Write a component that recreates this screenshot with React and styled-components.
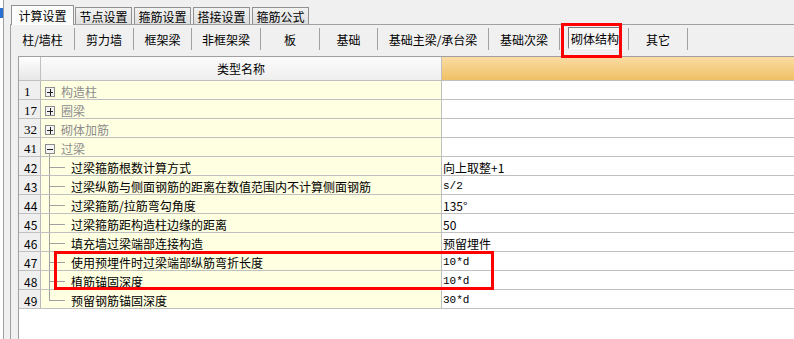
import styled, { createGlobalStyle } from "styled-components";

const GlobalStyle = createGlobalStyle`
  html, body { margin: 0; padding: 0; background: #f0f0f0; }
  body {
    font-family: "Noto Sans CJK SC", "Liberation Sans", sans-serif;
    font-size: 12px;
    color: #000;
  }
`;

const topTabs = [
  { label: "计算设置", active: true },
  { label: "节点设置" },
  { label: "箍筋设置" },
  { label: "搭接设置" },
  { label: "箍筋公式" },
];

const subTabs = [
  { label: "柱/墙柱", w: 64 },
  { label: "剪力墙", w: 59 },
  { label: "框架梁", w: 58 },
  { label: "非框架梁", w: 69 },
  { label: "板", w: 59 },
  { label: "基础", w: 58 },
  { label: "基础主梁/承台梁", w: 111 },
  { label: "基础次梁", w: 71 },
  { label: "砌体结构", w: 69, active: true },
  { label: "其它", w: 59 },
];

const rows = [
  { no: 1, name: "构造柱", group: "plus" },
  { no: 17, name: "圈梁", group: "plus" },
  { no: 32, name: "砌体加筋", group: "plus" },
  { no: 41, name: "过梁", group: "minus" },
  { no: 42, name: "过梁箍筋根数计算方式", value: "向上取整+1" },
  { no: 43, name: "过梁纵筋与侧面钢筋的距离在数值范围内不计算侧面钢筋", value: "s/2", mono: true },
  { no: 44, name: "过梁箍筋/拉筋弯勾角度", value: "135°" },
  { no: 45, name: "过梁箍筋距构造柱边缘的距离", value: "50" },
  { no: 46, name: "填充墙过梁端部连接构造", value: "预留埋件" },
  { no: 47, name: "使用预埋件时过梁端部纵筋弯折长度", value: "10*d", mono: true },
  { no: 48, name: "植筋锚固深度", value: "10*d", mono: true },
  { no: 49, name: "预留钢筋锚固深度", value: "30*d", mono: true, last: true },
];

function TreeGlyph({ group, last }) {
  if (group) {
    return (
      <svg width="20" height="18" style={{ flex: "none" }}>
        {group === "minus" && (
          <line x1="8.5" y1="15" x2="8.5" y2="18" stroke="#a0a0a0" />
        )}
        <rect x="4.5" y="6.5" width="9" height="9" fill="#f4f4f4" stroke="#8c8c8c" />
        <line x1="6" y1="11.5" x2="12" y2="11.5" stroke="#202020" />
        {group === "plus" && (
          <line x1="9.5" y1="8" x2="9.5" y2="15" stroke="#202020" />
        )}
      </svg>
    );
  }
  return (
    <svg width="30" height="18" style={{ flex: "none" }}>
      <line x1="8.5" y1="0" x2="8.5" y2={last ? 11 : 18} stroke="#a0a0a0" />
      <line x1="8" y1="10.5" x2="24" y2="10.5" stroke="#a0a0a0" />
    </svg>
  );
}

export default function App() {
  return (
    <>
      <GlobalStyle />
      <Page>
        <SideStrip>
          <SideSelection />
        </SideStrip>
        <TabControl>
          <TabStrip>
            {topTabs.map((t) => (
              <Tab key={t.label} $active={t.active}>
                {t.label}
              </Tab>
            ))}
          </TabStrip>
          <Panel>
            <SubTabRow>
              {subTabs.map((t) => (
                <SubTab key={t.label} $w={t.w}>
                  {t.active ? <Pressed>{t.label}</Pressed> : t.label}
                </SubTab>
              ))}
            </SubTabRow>
            <GridArea>
              <HeaderRow>
                <HeadNo />
                <HeadName>类型名称</HeadName>
                <HeadValue />
              </HeaderRow>
              {rows.map((r) => (
                <Row key={r.no}>
                  <NoCell $serif={!!r.group}>{r.no}</NoCell>
                  <NameCell>
                    <TreeGlyph group={r.group} last={r.last} />
                    <Label $group={!!r.group}>{r.name}</Label>
                  </NameCell>
                  <ValueCell $mono={r.mono}>{r.value}</ValueCell>
                </Row>
              ))}
            </GridArea>
          </Panel>
        </TabControl>
        <Mark style={{ left: 561, top: 23, width: 61, height: 35 }} />
        <Mark style={{ left: 54, top: 251, width: 440, height: 39 }} />
      </Page>
    </>
  );
}

const Page = styled.div`
  position: relative;
  display: flex;
  width: 794px;
  height: 339px;
  overflow: hidden;
`;

const SideStrip = styled.div`
  flex: none;
  width: 3px;
  padding-top: 8px;
  background: #fff;
  border-right: 1px solid #a0a0a0;
`;

const SideSelection = styled.div`
  height: 10px;
  background: #2b6fd4;
`;

const TabControl = styled.div`
  flex: 1;
  min-width: 0;
  margin-left: 6px;
  display: flex;
  flex-direction: column;
`;

const TabStrip = styled.div`
  flex: none;
  height: 24px;
  display: flex;
  align-items: flex-end;
  gap: 2px;
  padding-left: 1px;
  border-bottom: 1px solid #a0a0a0;
`;

const Tab = styled.div`
  box-sizing: border-box;
  display: flex;
  align-items: center;
  justify-content: center;
  width: ${(p) => (p.$active ? "63px" : "57px")};
  height: ${(p) => (p.$active ? "20px" : "17px")};
  margin-bottom: ${(p) => (p.$active ? "-1px" : "0")};
  margin-right: ${(p) => (p.$active ? "-1px" : "0")};
  padding-top: 1px;
  border: 1px solid #919191;
  border-bottom: none;
  background: ${(p) =>
    p.$active ? "#fcfcfc" : "linear-gradient(#f2f2f2, #dedede)"};
  line-height: 14px;
  white-space: nowrap;
`;

const Panel = styled.div`
  flex: 1;
  display: flex;
  flex-direction: column;
  border-left: 1px solid #a0a0a0;
`;

const SubTabRow = styled.div`
  flex: none;
  display: flex;
  height: 26px;
  padding-top: 3px;
  box-sizing: border-box;
`;

const SubTab = styled.div`
  box-sizing: border-box;
  flex: none;
  width: ${(p) => p.$w}px;
  height: 22px;
  display: flex;
  align-items: center;
  justify-content: center;
  border-right: 1px solid #a0a0a0;
  white-space: nowrap;
`;

const Pressed = styled.div`
  box-sizing: border-box;
  width: 54px;
  height: 22px;
  margin-top: -2px;
  margin-left: 2px;
  display: flex;
  align-items: center;
  justify-content: center;
  border: 1px solid;
  border-color: #7a7a7a #ffffff #ffffff #7a7a7a;
  background: #f6f6f6;
`;

const GridArea = styled.div`
  flex: 1;
  margin-top: 5px;
  margin-left: 7px;
  background: #fff;
  border-left: 1px solid #a0a0a0;
  border-top: 1px solid #a0a0a0;
`;

const HeaderRow = styled.div`
  display: grid;
  grid-template-columns: 22px 401px 1fr;
  height: 24px;
  box-sizing: border-box;
  border-bottom: 1px solid #c0c0c0;
`;

const HeadNo = styled.div`
  border-right: 1px solid #c0c0c0;
  background: linear-gradient(#ffffff, #e6e6e6);
`;

const HeadName = styled.div`
  display: flex;
  align-items: center;
  justify-content: center;
  border-right: 1px solid #c0c0c0;
  background: linear-gradient(#fbfbfb, #efefef);
`;

const HeadValue = styled.div`
  background: linear-gradient(#fadca4, #f0c065);
`;

const Row = styled.div`
  display: grid;
  grid-template-columns: 22px 401px 1fr;
  height: 19px;
  box-sizing: border-box;
  border-bottom: 1px solid #c0c0c0;
`;

const NoCell = styled.div`
  padding: 3px 0 0 5px;
  line-height: 15px;
  font-family: ${(p) =>
    p.$serif ? '"Liberation Serif", serif' : '"Noto Sans CJK SC", sans-serif'};
  font-size: ${(p) => (p.$serif ? "13px" : "12px")};
  background: #efefef;
  border-right: 1px solid #b8b8b8;
`;

const NameCell = styled.div`
  display: flex;
  align-items: flex-start;
  background: #ffffe1;
  border-right: 1px solid #c0c0c0;
  overflow: hidden;
`;

const Label = styled.span`
  padding-top: 3px;
  line-height: 15px;
  white-space: nowrap;
  color: ${(p) => (p.$group ? "#8c8c8c" : "#000")};
`;

const ValueCell = styled.div`
  padding: 3px 0 0 1px;
  line-height: 15px;
  white-space: nowrap;
  font-family: ${(p) =>
    p.$mono ? '"Liberation Mono", monospace' : '"Noto Sans CJK SC", sans-serif'};
  font-size: ${(p) => (p.$mono ? "11px" : "12px")};
`;

const Mark = styled.div`
  position: absolute;
  box-sizing: border-box;
  border: 3px solid #ff0000;
  pointer-events: none;
`;
